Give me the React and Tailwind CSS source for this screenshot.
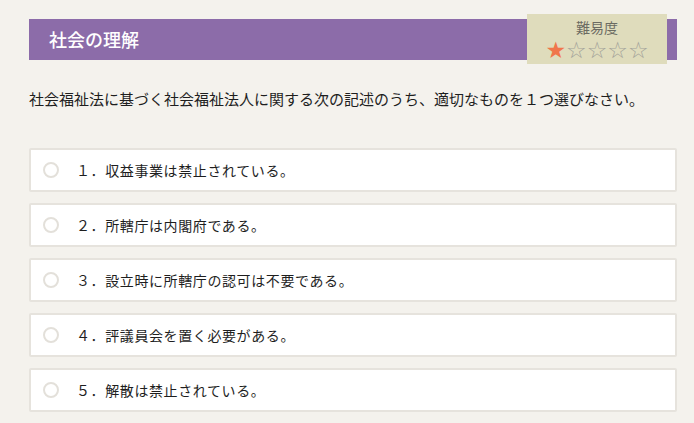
import React, { useState } from 'react';

const choices = [
  '１．収益事業は禁止されている。',
  '２．所轄庁は内閣府である。',
  '３．設立時に所轄庁の認可は不要である。',
  '４．評議員会を置く必要がある。',
  '５．解散は禁止されている。',
];

function App() {
  const [selected, setSelected] = useState(null);

  return (
    <div
      className="min-h-[423px] bg-[#f4f2ed] pl-[29px] pr-[17px] pt-[14px] pb-[10px] text-[#1e1e1e]"
      style={{ fontFamily: '"Noto Sans CJK JP", "Noto Sans", sans-serif' }}
    >
      {/* Header */}
      <div className="relative">
        <div className="mt-[5px] flex h-[41px] items-center bg-[#8c6ca9] pl-[20px] text-[18px] font-medium text-white">
          社会の理解
        </div>
        <div className="absolute right-[10px] top-[-5px] flex h-[50px] w-[140px] flex-col items-center bg-[#dfdcbc]">
          <div className="mt-[4px] text-[14px] leading-[18px] text-[#6b6b62]">難易度</div>
          <div
            className="mt-[1px] flex text-[23px] leading-[26px]"
            style={{ fontFamily: '"DejaVu Sans", sans-serif' }}
          >
            <span className="text-[#f0764b]">★</span>
            <span className="text-[#a3a39a]">☆☆☆☆</span>
          </div>
        </div>
      </div>

      {/* Question */}
      <p className="mt-[28px] text-[15px] leading-[22px]">
        社会福祉法に基づく社会福祉法人に関する次の記述のうち、適切なものを１つ選びなさい。
      </p>

      {/* Choices */}
      <div className="mt-[38px] flex flex-col gap-[11px]">
        {choices.map((c, i) => (
          <button
            key={i}
            onClick={() => setSelected(i)}
            className="flex h-[44px] items-center rounded-[2px] border-2 border-[#e6e3dd] bg-white pl-[12px] text-left text-[14px]"
          >
            <span
              className={`h-[16px] w-[16px] shrink-0 rounded-full border-2 ${
                selected === i ? 'border-[#8c6ca9] bg-[#8c6ca9]' : 'border-[#e3e0da]'
              }`}
            />
            <span className="ml-[17px] tracking-[0.6px]">{c}</span>
          </button>
        ))}
      </div>
    </div>
  );
}

export default App;
